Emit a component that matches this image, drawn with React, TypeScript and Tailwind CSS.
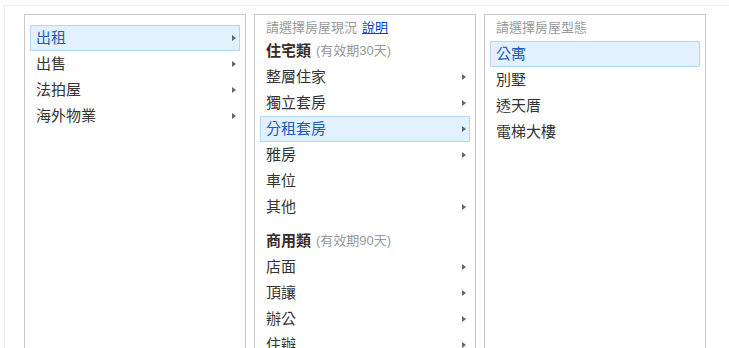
import React from "react";

type Item = { label: string; arrow?: boolean; active?: boolean };

const mainTypes: Item[] = [
  { label: "出租", arrow: true, active: true },
  { label: "出售", arrow: true },
  { label: "法拍屋", arrow: true },
  { label: "海外物業", arrow: true },
];

const houseItems: Item[] = [
  { label: "整層住家", arrow: true },
  { label: "獨立套房", arrow: true },
  { label: "分租套房", arrow: true, active: true },
  { label: "雅房", arrow: true },
  { label: "車位" },
  { label: "其他", arrow: true },
];

const shopItems: Item[] = [
  { label: "店面", arrow: true },
  { label: "頂讓", arrow: true },
  { label: "辦公", arrow: true },
  { label: "住辦", arrow: true },
  { label: "廠房", arrow: true },
];

const styleItems: Item[] = [
  { label: "公寓", active: true },
  { label: "別墅" },
  { label: "透天厝" },
  { label: "電梯大樓" },
];

function Row({ item }: { item: Item }) {
  return (
    <div
      className={
        "flex items-center justify-between h-[26px] border pl-[5px] pr-[3px] text-[15px] cursor-pointer " +
        (item.active
          ? "bg-[#e3f0fe] border-[#b7d5f8] text-[#1a5fb8]"
          : "border-transparent text-[#333]")
      }
    >
      <span>{item.label}</span>
      {item.arrow && (
        <span className="w-0 h-0 border-y-[3px] border-y-transparent border-l-[4px] border-l-[#666]" />
      )}
    </div>
  );
}

function Category({ name, days }: { name: string; days: number }) {
  return (
    <div className="flex items-center h-[26px] pl-[6px]">
      <span className="text-[15px] font-bold text-[#3a2a2a]">{name}</span>
      <span className="ml-[5px] text-[13px] text-[#999]">(有效期{days}天)</span>
    </div>
  );
}

export default function App() {
  return (
    <div className="h-[348px] w-full overflow-hidden bg-white pl-[4px] pt-[5px] font-['Liberation_Sans','Noto_Sans_CJK_TC',sans-serif]">
      <div className="h-[400px] border-l border-t border-[#ececec] pl-[19px] pt-[8px] flex gap-[8px]">
        <div className="w-[222px] h-[400px] border border-[#c9c9c9] px-[5px] pt-[10px]">
          {mainTypes.map((it) => (
            <Row key={it.label} item={it} />
          ))}
        </div>

        <div className="w-[222px] h-[400px] border border-[#c9c9c9] px-[5px] pt-[2px]">
          <div className="h-[21px] flex items-center pl-[6px] text-[13px] text-[#999]">
            請選擇房屋現況
            <a href="#" className="ml-[5px] text-[#0a3fd2] underline">
              說明
            </a>
          </div>
          <Category name="住宅類" days={30} />
          {houseItems.map((it) => (
            <Row key={it.label} item={it} />
          ))}
          <div className="mt-[8px]">
            <Category name="商用類" days={90} />
          </div>
          {shopItems.map((it) => (
            <Row key={it.label} item={it} />
          ))}
        </div>

        <div className="w-[222px] h-[400px] border border-[#c9c9c9] px-[5px] pt-[2px]">
          <div className="h-[21px] flex items-center pl-[6px] text-[13px] text-[#999]">
            請選擇房屋型態
          </div>
          <div className="mt-[3px]">
            {styleItems.map((it) => (
              <Row key={it.label} item={it} />
            ))}
          </div>
        </div>
      </div>
    </div>
  );
}
